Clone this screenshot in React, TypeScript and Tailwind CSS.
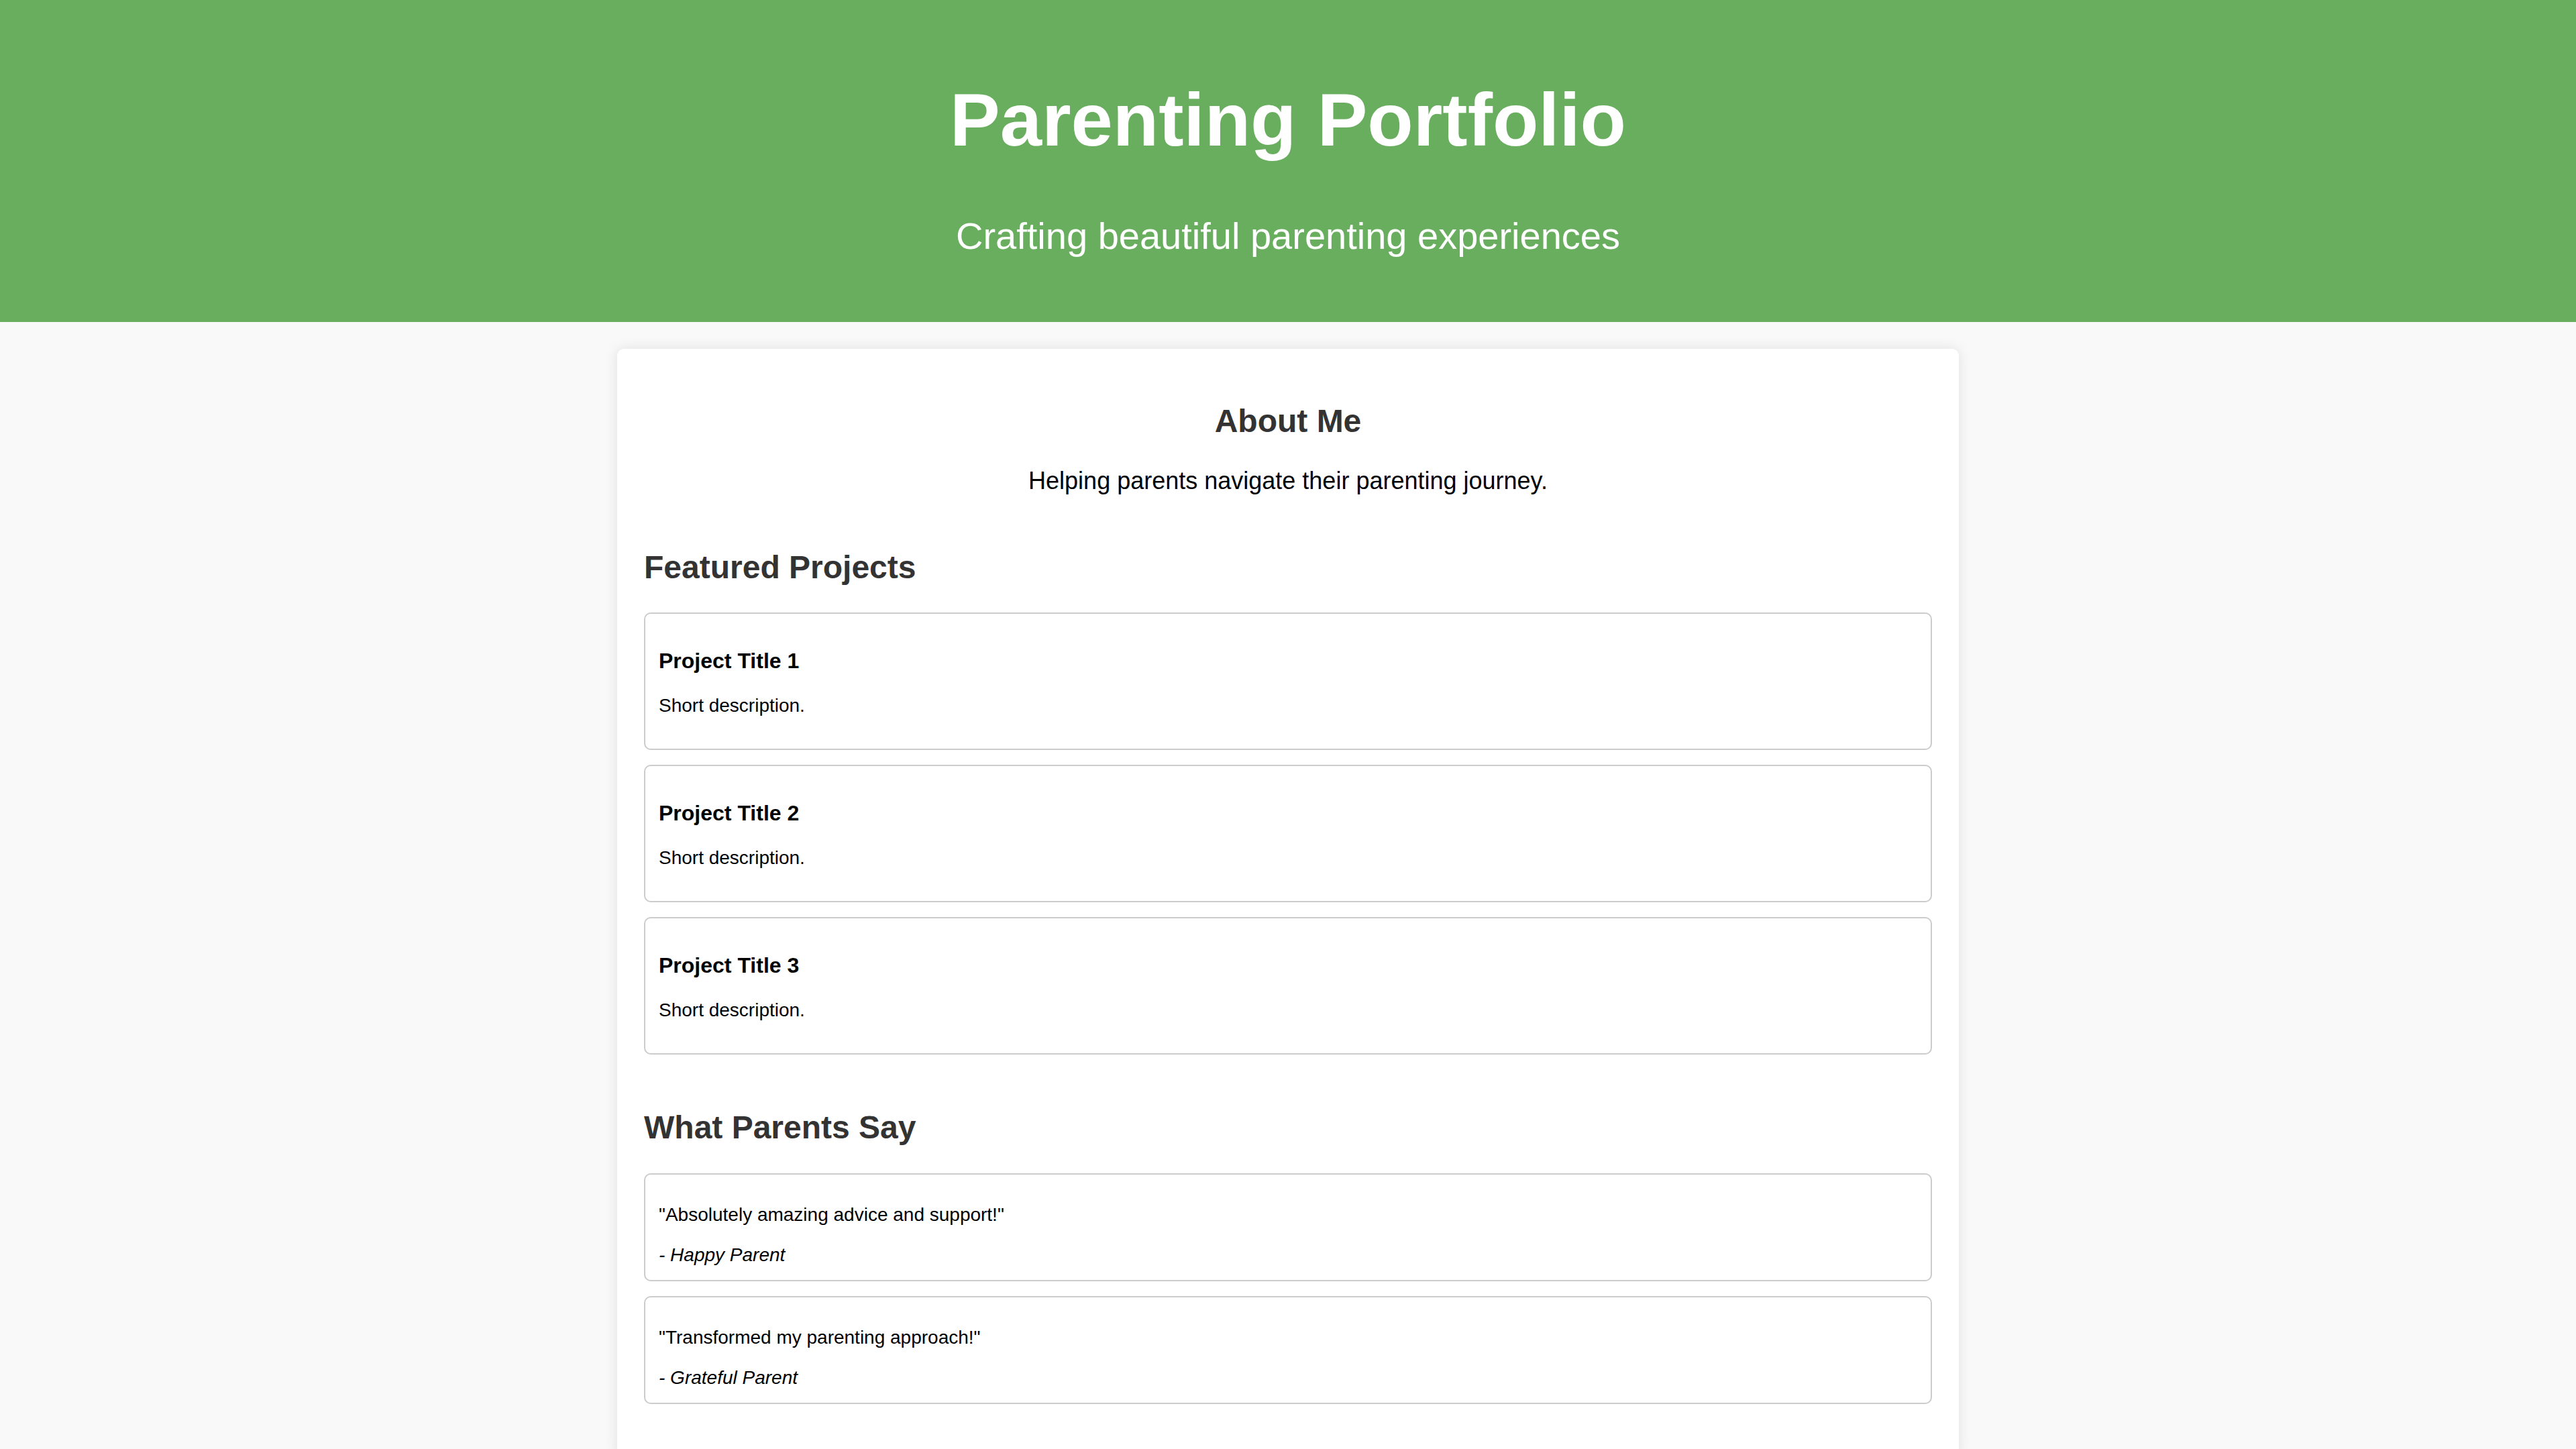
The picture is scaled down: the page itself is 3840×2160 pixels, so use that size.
import React from 'react';

const projects = [
  { id: 1, title: 'Project Title 1', description: 'Short description.' },
  { id: 2, title: 'Project Title 2', description: 'Short description.' },
  { id: 3, title: 'Project Title 3', description: 'Short description.' },
];

const testimonials = [
  { id: 1, quote: '"Absolutely amazing advice and support!"', author: '- Happy Parent' },
  { id: 2, quote: '"Transformed my parenting approach!"', author: '- Grateful Parent' },
];

const Header: React.FC = () => (
  <header className="bg-[#69ae5e] text-white text-center pt-[40px] pb-[40px]">
    <h1 className="mt-[75px] mb-[77px] text-[112px] leading-[128px] font-bold">Parenting Portfolio</h1>
    <p className="mb-[56px] text-[56px] leading-[64px]">Crafting beautiful parenting experiences</p>
  </header>
);

const ProjectCard: React.FC<{ title: string; description: string }> = ({ title, description }) => (
  <div className="border-2 border-[#cccccc] rounded-[10px] px-[20px] py-[20px] mb-[22px]">
    <h3 className="mt-[32px] text-[32px] leading-[37px] font-bold text-black">{title}</h3>
    <p className="mt-[32px] mb-[28px] text-[28px] leading-[32px] text-black">{description}</p>
  </div>
);

const TestimonialCard: React.FC<{ quote: string; author: string }> = ({ quote, author }) => (
  <div className="border-2 border-[#cccccc] rounded-[10px] px-[20px] pt-[20px] pb-[21px] mb-[22px]">
    <p className="mt-[24px] mb-[28px] text-[28px] leading-[32px] text-black">{quote}</p>
    <p className="text-[28px] leading-[32px] italic text-black">{author}</p>
  </div>
);

export default function App() {
  return (
    <div className="min-h-screen bg-[#f9f9f9] font-['Liberation_Sans',Arial,sans-serif]">
      <Header />

      <main className="w-[2000px] mx-auto mt-[40px] mb-[40px] bg-white rounded-[10px] shadow-[0_0_20px_rgba(0,0,0,0.1)] px-[40px] pt-[40px] pb-[60px]">
        <section className="text-center">
          <h2 className="mt-[40px] text-[48px] leading-[55px] font-bold text-[#333333]">About Me</h2>
          <p className="mt-[41px] text-[36px] leading-[41px] text-black">
            Helping parents navigate their parenting journey.
          </p>
        </section>

        <section>
          <h2 className="mt-[81px] mb-[40px] text-[48px] leading-[55px] font-bold text-[#333333]">Featured Projects</h2>
          {projects.map((p) => (
            <ProjectCard key={p.id} title={p.title} description={p.description} />
          ))}
        </section>

        <section>
          <h2 className="mt-[81px] mb-[41px] text-[48px] leading-[55px] font-bold text-[#333333]">What Parents Say</h2>
          {testimonials.map((t) => (
            <TestimonialCard key={t.id} quote={t.quote} author={t.author} />
          ))}
        </section>
      </main>
    </div>
  );
}
